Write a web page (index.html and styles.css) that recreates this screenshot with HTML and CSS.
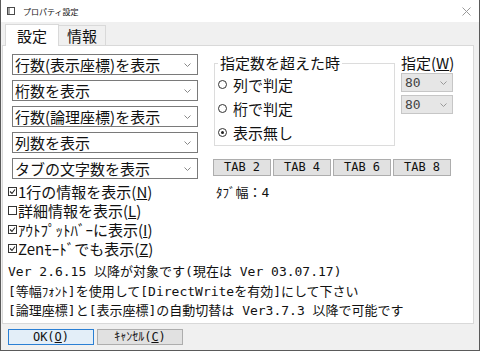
FILE: index.html
```html
<!DOCTYPE html>
<html>
<head>
    <meta charset="utf-8">
    <title>プロパティ設定</title>
    <link rel="stylesheet" href="styles.css">
</head>
<body>
<div class="window">
    <div class="titlebar">
        <svg class="app-icon" width="8" height="8" viewBox="0 0 8 8">
            <rect x="0.5" y="0.5" width="7" height="7" fill="#fff" stroke="#4a4a4a"/>
            <rect x="1" y="1" width="2" height="6" fill="#a0a0a0"/>
        </svg>
        <span class="title">プロパティ設定</span>
        <svg class="close" width="9" height="9" viewBox="0 0 9 9">
            <path d="M0.5 0.5 L8.5 8.5 M8.5 0.5 L0.5 8.5" stroke="#9a9a9a" stroke-width="1"/>
        </svg>
    </div>

    <div class="tabs">
        <div class="tab active">設定</div>
        <div class="tab">情報</div>
    </div>

    <div class="panel">
        <div class="top">
            <div class="left-col">
                <div class="select"><span>行数(表示座標)を表示</span><svg class="chev" width="7" height="4" viewBox="0 0 7 4"><path d="M0.5 0.5 L3.5 3.5 L6.5 0.5" fill="none" stroke="#888"/></svg></div>
                <div class="select"><span>桁数を表示</span><svg class="chev" width="7" height="4" viewBox="0 0 7 4"><path d="M0.5 0.5 L3.5 3.5 L6.5 0.5" fill="none" stroke="#888"/></svg></div>
                <div class="select"><span>行数(論理座標)を表示</span><svg class="chev" width="7" height="4" viewBox="0 0 7 4"><path d="M0.5 0.5 L3.5 3.5 L6.5 0.5" fill="none" stroke="#888"/></svg></div>
                <div class="select"><span>列数を表示</span><svg class="chev" width="7" height="4" viewBox="0 0 7 4"><path d="M0.5 0.5 L3.5 3.5 L6.5 0.5" fill="none" stroke="#888"/></svg></div>
                <div class="select"><span>タブの文字数を表示</span><svg class="chev" width="7" height="4" viewBox="0 0 7 4"><path d="M0.5 0.5 L3.5 3.5 L6.5 0.5" fill="none" stroke="#888"/></svg></div>

                <div class="checks">
                    <div class="check"><span class="box"><svg width="7" height="7" viewBox="0 0 7 7"><path d="M1 3.5 L3 5.5 L6 1.5" fill="none" stroke="#222" stroke-width="1.1"/></svg></span>1行の情報を表示(<u>N</u>)</div>
                    <div class="check"><span class="box"></span>詳細情報を表示(<u>L</u>)</div>
                    <div class="check"><span class="box"><svg width="7" height="7" viewBox="0 0 7 7"><path d="M1 3.5 L3 5.5 L6 1.5" fill="none" stroke="#222" stroke-width="1.1"/></svg></span>ｱｳﾄﾌﾟｯﾄﾊﾞｰに表示(<u>I</u>)</div>
                    <div class="check"><span class="box"><svg width="7" height="7" viewBox="0 0 7 7"><path d="M1 3.5 L3 5.5 L6 1.5" fill="none" stroke="#222" stroke-width="1.1"/></svg></span>Zenﾓｰﾄﾞでも表示(<u>Z</u>)</div>
                </div>
            </div>

            <div class="right-col">
                <div class="right-top">
                    <fieldset class="group">
                        <legend>指定数を超えた時</legend>
                        <div class="radio"><span class="dot"></span>列で判定</div>
                        <div class="radio"><span class="dot"></span>桁で判定</div>
                        <div class="radio"><span class="dot on"></span>表示無し</div>
                    </fieldset>
                    <div class="spec">
                        <div class="spec-label">指定(<u>W</u>)</div>
                        <div class="select small"><span>80</span><svg class="chev" width="7" height="4" viewBox="0 0 7 4"><path d="M0.5 0.5 L3.5 3.5 L6.5 0.5" fill="none" stroke="#999"/></svg></div>
                        <div class="select small"><span>80</span><svg class="chev" width="7" height="4" viewBox="0 0 7 4"><path d="M0.5 0.5 L3.5 3.5 L6.5 0.5" fill="none" stroke="#999"/></svg></div>
                    </div>
                </div>

                <div class="tab-buttons">
                    <button class="tbtn">TAB 2</button>
                    <button class="tbtn">TAB 4</button>
                    <button class="tbtn">TAB 6</button>
                    <button class="tbtn">TAB 8</button>
                </div>
                <div class="tab-width">ﾀﾌﾞ幅：4</div>
            </div>
        </div>

        <div class="notes">
            <div>Ver 2.6.15 以降が対象です(現在は Ver 03.07.17)</div>
            <div>[等幅ﾌｫﾝﾄ]を使用して[DirectWriteを有効]にして下さい</div>
            <div>[論理座標]と[表示座標]の自動切替は Ver3.7.3 以降で可能です</div>
        </div>
    </div>

    <div class="footer">
        <button class="dbtn default">OK(<u>O</u>)</button>
        <button class="dbtn">ｷｬﾝｾﾙ(<u>C</u>)</button>
    </div>
</div>
</body>
</html>
```

FILE: styles.css
```css
body {
    margin: 0;
    background-color: #f0f0f0;
    color: #111;
    font-family: "Noto Sans CJK JP", sans-serif;
    font-size: 15px;
}

.window {
    width: 480px;
    height: 351px;
    box-sizing: border-box;
    border: 1px solid #5a5a5a;
    border-top: none;
    background-color: #f0f0f0;
    display: flex;
    flex-direction: column;
}

.titlebar {
    height: 22px;
    background-color: #fff;
    display: flex;
    align-items: center;
    padding-left: 6px;
}

.title {
    font-size: 8px;
    margin-left: 8px;
    color: #111;
}

.close {
    margin-left: auto;
    margin-right: 8px;
}

.tabs {
    height: 23px;
    display: flex;
    align-items: flex-end;
    padding-left: 4px;
}

.tab {
    height: 19px;
    line-height: 19px;
    padding: 0 8px;
    border: 1px solid #d9d9d9;
    border-bottom: none;
    border-left: none;
    background-color: #f0f0f0;
}

.tab.active {
    height: 21px;
    line-height: 21px;
    padding: 0 11px;
    background-color: #fff;
    border-left: 1px solid #d9d9d9;
    margin-bottom: -1px;
    position: relative;
    z-index: 1;
}

.panel {
    height: 279px;
    box-sizing: border-box;
    margin: 0 5px 0 1px;
    padding: 8px 0 0 5px;
    border: 1px solid #d9d9d9;
    background-color: #fff;
}

.top {
    display: flex;
}

.left-col {
    width: 190px;
}

.select {
    width: 186px;
    height: 21px;
    box-sizing: border-box;
    margin-left: 4px;
    border: 1px solid #7a7a7a;
    background-color: #fff;
    display: flex;
    align-items: center;
    justify-content: space-between;
    padding: 0 6px 0 2px;
    line-height: 19px;
}

.select + .select {
    margin-top: 5px;
}

.checks {
    margin-top: 3px;
}

.check {
    height: 19px;
    display: flex;
    align-items: center;
    white-space: nowrap;
}

.box {
    width: 9px;
    height: 9px;
    box-sizing: border-box;
    border: 1px solid #333;
    margin-right: 1px;
    display: flex;
    align-items: center;
    justify-content: center;
}

.right-col {
    margin-left: 15px;
}

.right-top {
    display: flex;
}

.group {
    width: 181px;
    box-sizing: border-box;
    margin: 0 0 0 1px;
    padding: 0 4px 1px 3px;
    border: 1px solid #dcdcdc;
}

.group legend {
    padding: 0 2px;
    line-height: 18px;
}

.radio {
    height: 24px;
    display: flex;
    align-items: center;
}

.dot {
    width: 9px;
    height: 9px;
    box-sizing: border-box;
    border: 1px solid #333;
    border-radius: 50%;
    margin-right: 6px;
    display: flex;
    align-items: center;
    justify-content: center;
}

.dot.on::after {
    content: "";
    width: 3px;
    height: 3px;
    border-radius: 50%;
    background-color: #222;
}

.spec {
    margin-left: 6px;
}

.spec-label {
    line-height: 18px;
}

.select.small {
    width: 52px;
    height: 19px;
    margin: 1px 0 0 0;
    padding: 0 5px 0 3px;
    background-color: #e6e6e6;
    border-color: #c6c6c6;
    color: #444;
    font-family: "DejaVu Sans Mono", "Noto Sans CJK JP", monospace;
    font-size: 13px;
}

.select.small + .select.small {
    margin-top: 3px;
}

.tab-buttons {
    display: flex;
    gap: 2px;
    margin-top: 13px;
}

.tbtn {
    width: 58px;
    height: 17px;
    padding: 0;
    border: 1px solid #adadad;
    background-color: #e1e1e1;
    color: #111;
    font-family: "DejaVu Sans Mono", "Noto Sans CJK JP", monospace;
    font-size: 12px;
    line-height: 15px;
}

.tab-width {
    margin: 8px 0 0 3px;
    line-height: 18px;
    font-family: "DejaVu Sans Mono", "Noto Sans CJK JP", monospace;
    font-size: 13px;
}

.notes {
    margin-top: 4px;
    font-family: "DejaVu Sans Mono", "Noto Sans CJK JP", monospace;
    font-size: 13px;
    line-height: 19.5px;
    white-space: nowrap;
}

.footer {
    flex: 1;
    display: flex;
    align-items: center;
    gap: 3px;
    padding-left: 7px;
}

.dbtn {
    width: 86px;
    height: 16px;
    padding: 0;
    border: 1px solid #adadad;
    background-color: #e1e1e1;
    color: #111;
    font-family: "DejaVu Sans Mono", "Noto Sans CJK JP", monospace;
    font-size: 12px;
    line-height: 14px;
}

.dbtn.default {
    border-color: #2a7fd4;
    background-color: #e3eef8;
}
```
